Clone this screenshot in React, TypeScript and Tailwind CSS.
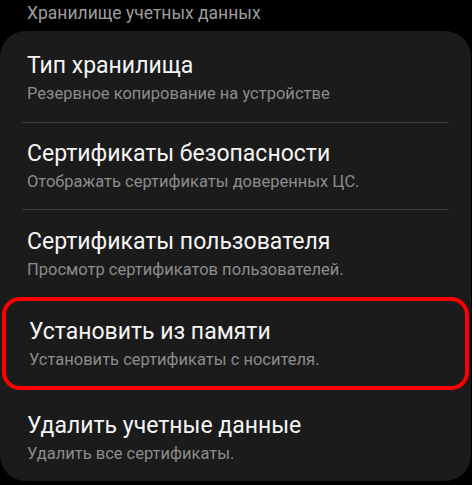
const rows = [
  { title: "Тип хранилища", sub: "Резервное копирование на устройстве", h: "h-[89px]" },
  { title: "Сертификаты безопасности", sub: "Отображать сертификаты доверенных ЦС.", h: "h-[86px]" },
  { title: "Сертификаты пользователя", sub: "Просмотр сертификатов пользователей.", h: "h-[87px]" },
  { title: "Установить из памяти", sub: "Установить сертификаты с носителя.", h: "h-[93px]", marked: true },
  { title: "Удалить учетные данные", sub: "Удалить все сертификаты.", h: "h-[90px] pt-[5px]" },
];

function Row({ title, sub, h, marked }: { title: string; sub: string; h: string; marked?: boolean }) {
  return (
    <div
      className={
        marked
          ? `flex ${h} flex-col justify-center rounded-[18px] border-[4px] border-[#ff0000] pl-[23px]`
          : `flex ${h} flex-col justify-center pl-[27px]`
      }
    >
      <div className="text-[23px] leading-[28px] text-[#f5f5f5]">{title}</div>
      <div className="mt-[3px] text-[16.5px] leading-[21px] text-[#8c8c8c]">{sub}</div>
    </div>
  );
}

export default function App() {
  return (
    <div
      className="h-[485px] w-[472px] overflow-hidden bg-black"
      style={{ fontFamily: "Roboto, 'Noto Sans', sans-serif" }}
    >
      <div className="h-[31px] pl-[27px] pt-[3px] text-[17.5px] leading-[21px] text-[#9e9e9e]">
        Хранилище учетных данных
      </div>
      <div className="mr-[1px] h-[450px] overflow-hidden rounded-[26px] bg-[#1b1b1b] pt-[2px]">
        {rows.map((r, i) => (
          <div key={r.title}>
            {i > 0 && i < 3 && <div className="mx-[22px] h-px bg-[#3b3b3b]" />}
            {r.marked ? (
              <div className="px-[2px]">
                <Row {...r} />
              </div>
            ) : (
              <Row {...r} />
            )}
          </div>
        ))}
      </div>
    </div>
  );
}
